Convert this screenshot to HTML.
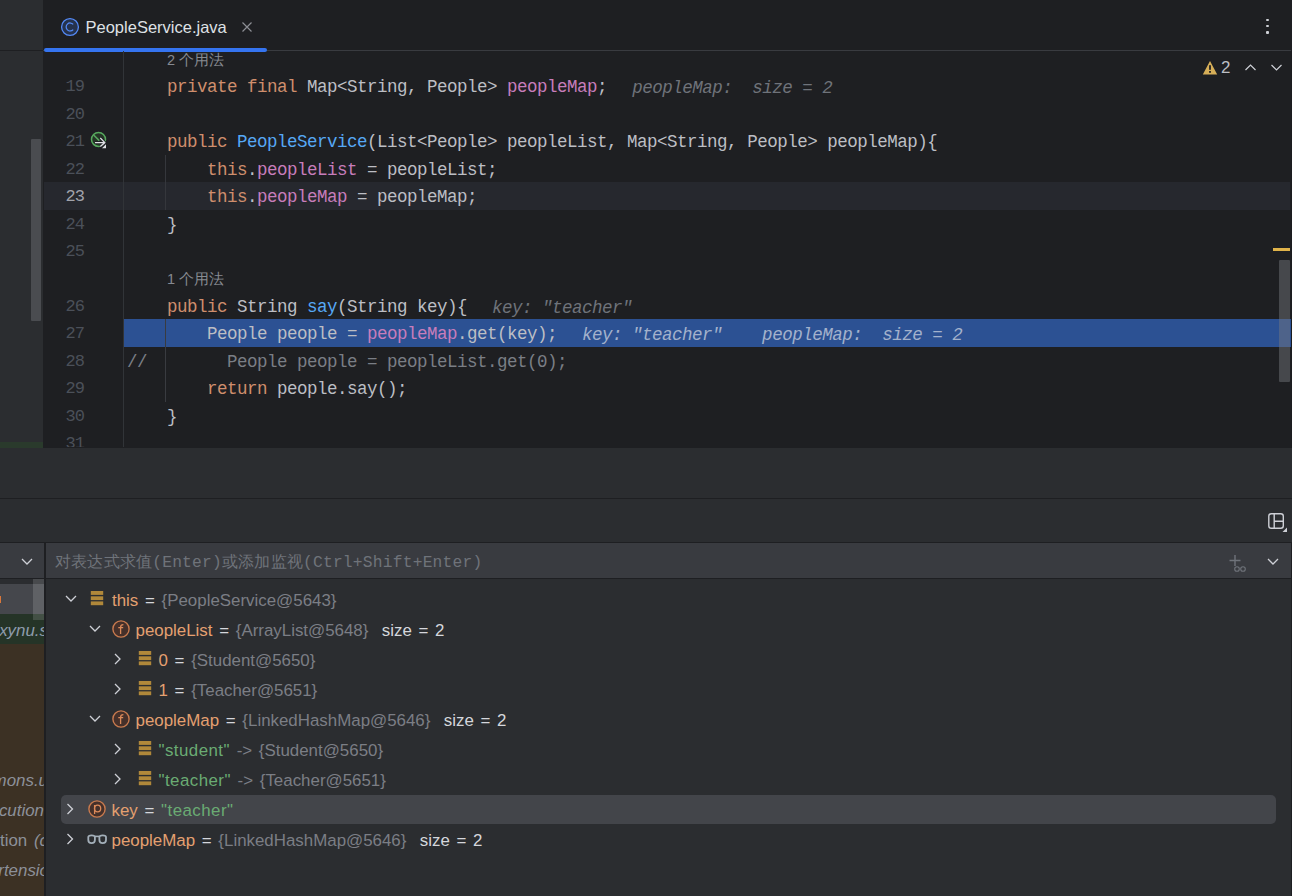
<!DOCTYPE html>
<html><head><meta charset="utf-8">
<style>
*{margin:0;padding:0;box-sizing:border-box}
html,body{width:1292px;height:896px;overflow:hidden;background:#2b2d30}
body{position:relative;font-family:"Liberation Sans",sans-serif}
.abs{position:absolute}
.mono{font-family:"Liberation Mono",monospace}
/* editor */
#editor{left:43px;top:0;width:1249px;height:448px;background:#1e1f22;overflow:hidden}
#tabsep{left:0;top:50px;width:1248px;height:1px;background:#393b40}
#tabline{left:1px;top:48px;width:223px;height:3.6px;background:#3574f0;border-radius:2px}
#tabtext{left:42.5px;top:15px;font-size:16.5px;color:#dfe1e5;white-space:pre;line-height:24px}
.row{position:absolute;left:0;width:1249px;height:27.43px;line-height:27.43px;white-space:pre;font-family:"Liberation Mono",monospace;font-size:17.5px;letter-spacing:-0.5px;color:#bcbec4}
.ln{position:absolute;left:0;width:41px;text-align:right;color:#4b5059;font-size:17px;letter-spacing:-0.9px;transform:translateY(-0.7px)}
.code{position:absolute;left:84px}
.hintu{position:absolute;left:124px;font-family:"Liberation Sans",sans-serif;font-size:14.5px;letter-spacing:0.1px;color:#868a91}
.kw{color:#cf8e6d}.fn{color:#56a8f5}.fld{color:#c77dbb}.cmt{color:#7a7e85}
.iv{font-style:italic;color:#6f737a;margin-left:5px;position:relative;top:1px}
#gsep{left:80px;top:51px;width:1px;height:396px;background:#313438}
/* lower */
.hline{position:absolute;left:0;width:1292px;height:1px;background:#1e1f22}
.tree{position:absolute;height:30px;line-height:30px;white-space:pre;font-size:16.9px;word-spacing:2px;color:#d5d7dc}
.vn{color:#e4a070}.vv{color:#7b7e85}.vs{color:#6aab73;letter-spacing:0.45px}
</style></head>
<body>
<!-- left side panel -->
<div class="abs" style="left:0;top:0;width:43px;height:448px;background:#2b2d30"></div>
<div class="abs" style="left:0;top:50px;width:43px;height:1px;background:#1e1f22"></div>
<div class="abs" style="left:31px;top:139px;width:10px;height:182px;background:#4a4c50;border-radius:1px"></div>
<div class="abs" style="left:0;top:442px;width:43px;height:5.5px;background:#2a3a2c"></div>

<div id="editor" class="abs">
  <div id="tabsep" class="abs"></div>
  <!-- tab icon -->
  <svg class="abs" style="left:17px;top:17px" width="20" height="20" viewBox="0 0 20 20">
    <circle cx="10" cy="10" r="8.4" fill="#25324d" stroke="#548af7" stroke-width="1.3"/>
    <path d="M13.2 7.4 A4 4 0 1 0 13.2 12.6" fill="none" stroke="#548af7" stroke-width="1.25"/>
  </svg>
  <div id="tabtext" class="abs">PeopleService.java</div>
  <svg class="abs" style="left:198px;top:21px" width="12" height="12" viewBox="0 0 12 12">
    <path d="M1.5 1.5 L10.5 10.5 M10.5 1.5 L1.5 10.5" stroke="#8c8e94" stroke-width="1.2"/>
  </svg>
  <div id="tabline" class="abs"></div>
  <!-- kebab -->
  <div class="abs" style="left:1223px;top:18.5px;width:2.5px;height:2.5px;background:#ced0d6;border-radius:1px"></div>
  <div class="abs" style="left:1223px;top:24.7px;width:2.5px;height:2.5px;background:#ced0d6;border-radius:1px"></div>
  <div class="abs" style="left:1223px;top:31px;width:2.5px;height:2.5px;background:#ced0d6;border-radius:1px"></div>

  <!-- caret row & execution line -->
  <div class="abs" style="left:1px;top:182.3px;width:1246px;height:27.43px;background:#26282e"></div>
  <div class="abs" style="left:81px;top:318.7px;width:1167px;height:28.3px;background:#2c5193"></div>
  <div id="gsep" class="abs"></div>
  <!-- indent guides -->
  <div class="abs" style="left:122px;top:154.5px;width:1px;height:55px;background:#35373c"></div>
  <div class="abs" style="left:122px;top:318.7px;width:1px;height:83px;background:#393b40"></div>

  <div class="abs" style="left:0;top:51px;width:1249px;height:396px;overflow:hidden"><div class="abs" style="left:0;top:-4px;width:1249px;height:402px">
    <div class="row" style="top:0px"><span class="hintu">2 个用法</span></div>
    <div class="row" style="top:27.43px"><span class="ln">19</span><span class="code">    <span class="kw">private final </span>Map&lt;String, People&gt; <span class="fld">peopleMap</span>;  <span class="iv">peopleMap:  size = 2</span></span></div>
    <div class="row" style="top:54.86px"><span class="ln">20</span></div>
    <div class="row" style="top:82.29px"><span class="ln">21</span><span class="code">    <span class="kw">public </span><span class="fn">PeopleService</span>(List&lt;People&gt; peopleList, Map&lt;String, People&gt; peopleMap){</span></div>
    <div class="row" style="top:109.72px"><span class="ln">22</span><span class="code">        <span class="kw">this</span>.<span class="fld">peopleList</span> = peopleList;</span></div>
    <div class="row" style="top:137.15px"><span class="ln" style="color:#a1a3ab">23</span><span class="code">        <span class="kw">this</span>.<span class="fld">peopleMap</span> = peopleMap;</span></div>
    <div class="row" style="top:164.58px"><span class="ln">24</span><span class="code">    }</span></div>
    <div class="row" style="top:192.01px"><span class="ln">25</span></div>
    <div class="row" style="top:219.44px"><span class="hintu">1 个用法</span></div>
    <div class="row" style="top:246.87px"><span class="ln">26</span><span class="code">    <span class="kw">public </span>String <span class="fn">say</span>(String key){  <span class="iv">key: "teacher"</span></span></div>
    <div class="row" style="top:274.30px"><span class="ln">27</span><span class="code">        People people = <span class="fld">peopleMap</span>.get(key);  <span class="iv" style="color:#a3b1cc">key: "teacher"    peopleMap:  size = 2</span></span></div>
    <div class="row" style="top:301.73px"><span class="ln">28</span><span class="code cmt">//        People people = peopleList.get(0);</span></div>
    <div class="row" style="top:329.16px"><span class="ln">29</span><span class="code">        <span class="kw">return </span>people.say();</span></div>
    <div class="row" style="top:356.59px"><span class="ln">30</span><span class="code">    }</span></div>
    <div class="row" style="top:384.02px"><span class="ln">31</span></div>
  </div></div>

  <!-- run gutter icon line 21 -->
  <svg class="abs" style="left:47px;top:131px" width="18" height="19" viewBox="0 0 18 19">
    <circle cx="8.5" cy="8.4" r="7" fill="#243426" stroke="#57a85e" stroke-width="1.5"/>
    <path d="M3.6 4 L9.3 9.6" stroke="#57a85e" stroke-width="1.5"/>
    <path d="M5 11.6 H14.6 M10.3 7 L14.8 11.6 L10.3 15.6" fill="none" stroke="#1e1f22" stroke-width="3"/>
    <path d="M5 11.6 H14.6 M10.3 7 L14.8 11.6 L10.3 15.6" fill="none" stroke="#dfe1e5" stroke-width="1.3"/>
    <path d="M12 17.2 L16 17.2 L16 13.2 Z" fill="#dfe1e5"/>
  </svg>

  <!-- warnings -->
  <svg class="abs" style="left:1159px;top:60px" width="16" height="16" viewBox="0 0 16 16">
    <path d="M8 1 L15.2 14.4 L0.8 14.4 Z" fill="#d6ae58"/>
    <rect x="7.1" y="5.2" width="1.8" height="4.6" fill="#1e1f22"/>
    <rect x="7.1" y="11" width="1.8" height="1.8" fill="#1e1f22"/>
  </svg>
  <div class="abs" style="left:1178px;top:57px;font-size:17px;line-height:22px;color:#bcbec4">2</div>
  <svg class="abs" style="left:1201px;top:63px" width="13" height="9" viewBox="0 0 13 9">
    <path d="M1.5 7 L6.5 2 L11.5 7" fill="none" stroke="#ced0d6" stroke-width="1.2"/>
  </svg>
  <svg class="abs" style="left:1227px;top:63px" width="13" height="9" viewBox="0 0 13 9">
    <path d="M1.5 2 L6.5 7 L11.5 2" fill="none" stroke="#ced0d6" stroke-width="1.2"/>
  </svg>
  <!-- scrollbar -->
  <div class="abs" style="left:1230px;top:248px;width:17px;height:2.5px;background:#e0b34a"></div>
  <div class="abs" style="left:1235.5px;top:259.5px;width:11px;height:122px;background:rgba(120,122,128,0.45);border-radius:1px"></div>
</div>

<div class="abs" style="left:1291px;top:51px;width:1px;height:397px;background:#1b1c1f"></div>
<!-- lower area -->
<div class="hline" style="top:498px"></div>
<div class="hline" style="top:542px"></div>
<!-- layout icon -->
<svg class="abs" style="left:1266px;top:511px" width="22" height="22" viewBox="0 0 22 22">
  <rect x="2.8" y="2.8" width="14.5" height="14.5" rx="2.5" fill="none" stroke="#ced0d6" stroke-width="1.4"/>
  <path d="M8.2 2.8 V17.3 M8.2 10.3 H17.3" stroke="#ced0d6" stroke-width="1.4"/>
  <path d="M16.5 21 L21 21 L21 16.5 Z" fill="#ced0d6"/>
</svg>
<!-- expression row -->
<div class="abs" style="left:0;top:543px;width:1291px;height:35px;background:#393b40"></div>
<div class="abs" style="left:44px;top:543px;width:1.6px;height:353px;background:#1e1f22"></div>
<svg class="abs" style="left:20px;top:556px" width="14" height="11" viewBox="0 0 14 11">
  <path d="M2 3 L7 8 L12 3" fill="none" stroke="#ced0d6" stroke-width="1.3"/>
</svg>
<div class="abs mono" style="left:55px;top:551px;font-size:16.3px;letter-spacing:0.2px;line-height:24px;color:#6f737a;white-space:pre">对表达式求值(Enter)或添加监视(Ctrl+Shift+Enter)</div>
<svg class="abs" style="left:1226px;top:552px" width="22" height="22" viewBox="0 0 22 22">
  <path d="M9 3 V14 M3.5 8.5 H14.5" stroke="#6f737a" stroke-width="1.4"/>
  <circle cx="11" cy="17" r="2.3" fill="none" stroke="#6f737a" stroke-width="1.1"/>
  <circle cx="17" cy="17" r="2.3" fill="none" stroke="#6f737a" stroke-width="1.1"/>
</svg>
<svg class="abs" style="left:1266px;top:556px" width="14" height="11" viewBox="0 0 14 11">
  <path d="M2 3 L7 8 L12 3" fill="none" stroke="#ced0d6" stroke-width="1.3"/>
</svg>
<div class="hline" style="top:578px"></div>
<div class="abs" style="left:1291px;top:543px;width:1px;height:353px;background:#1e1f22"></div>

<!-- frames list -->
<div class="abs" style="left:0;top:583.5px;width:44px;height:30.5px;background:#45474c"></div>
<div class="abs" style="left:0;top:595.5px;width:1.4px;height:7.5px;background:#d9773a"></div>
<div class="abs" style="left:0;top:614px;width:44px;height:30px;background:#253427"></div>
<div class="abs" style="left:0;top:644px;width:44px;height:252px;background:#3c3124"></div>
<div class="abs" style="left:33px;top:579px;width:10.5px;height:41px;background:rgba(255,255,255,0.14)"></div>
<div class="abs" style="left:0;top:579px;width:44px;height:317px;overflow:hidden">
  <div class="tree" style="right:-4px;top:37px;font-style:italic;color:#8d9bab">xynu.s</div>
  <div class="tree" style="right:-4px;top:187px;font-style:italic;color:#8c9099">mons.u</div>
  <div class="tree" style="right:0px;top:217px;font-style:italic;color:#8c9099">cution</div>
  <div class="tree" style="right:-4px;top:247px;color:#8c9099">tion <i>(c</i></div>
  <div class="tree" style="right:-5px;top:277px;font-style:italic;color:#8c9099">rtensio</div>
</div>

<!-- variables tree -->
<div class="abs" style="left:61px;top:794.5px;width:1215px;height:29.5px;background:#43454a;border-radius:5px"></div>
<!-- icons -->
<svg class="abs" style="left:0;top:579px" width="560" height="317" viewBox="0 579 560 317">
  <defs>
    <g id="chd"><path d="M-5 -3 L0 2 L5 -3" fill="none" stroke="#ced0d6" stroke-width="1.3"/></g>
    <g id="chr"><path d="M-3 -5 L2 0 L-3 5" fill="none" stroke="#ced0d6" stroke-width="1.3"/></g>
    <g id="stk" fill="#b0883a"><rect x="-6.2" y="-7" width="12.4" height="3.9"/><rect x="-6.2" y="-1.7" width="12.4" height="3.8"/><rect x="-6.2" y="3.4" width="12.4" height="3.8"/></g>
    <g id="fic"><circle r="8.1" fill="#45302a" stroke="#c97a4e" stroke-width="1.4"/></g>
  </defs>
  <use href="#chd" x="71" y="599"/>
  <use href="#stk" x="97" y="598"/>
  <use href="#chd" x="95" y="629"/>
  <use href="#fic" x="121" y="629"/>
  <path d="M120.6 634 V627.3 Q120.6 624.7 123.4 624.7 M118.3 627.6 H123.2" fill="none" stroke="#dc8a5a" stroke-width="1.3"/>
  <use href="#chr" x="118" y="659"/>
  <use href="#stk" x="145" y="658"/>
  <use href="#chr" x="118" y="689"/>
  <use href="#stk" x="145" y="688"/>
  <use href="#chd" x="95" y="719"/>
  <use href="#fic" x="121" y="719"/>
  <path d="M120.6 724 V717.3 Q120.6 714.7 123.4 714.7 M118.3 717.6 H123.2" fill="none" stroke="#dc8a5a" stroke-width="1.3"/>
  <use href="#chr" x="118" y="749"/>
  <use href="#stk" x="145" y="748"/>
  <use href="#chr" x="118" y="779"/>
  <use href="#stk" x="145" y="778"/>
  <use href="#chr" x="70.5" y="809"/>
  <use href="#fic" x="97" y="809"/>
  <path d="M94.6 805 V814" stroke="#dc8a5a" stroke-width="1.3"/><ellipse cx="97.6" cy="808.5" rx="3.1" ry="3.4" fill="none" stroke="#dc8a5a" stroke-width="1.3"/>
  <use href="#chr" x="70.5" y="839"/>
  <g fill="none" stroke="#a3afb9" stroke-width="1.8">
    <path d="M88.3 837 Q88.3 835.4 91.6 835.4 Q94.9 835.4 94.9 837 V840 Q94.9 843.2 91.6 843.2 Q88.3 843.2 88.3 840 Z"/><path d="M99.4 837 Q99.4 835.4 102.7 835.4 Q106 835.4 106 837 V840 Q106 843.2 102.7 843.2 Q99.4 843.2 99.4 840 Z"/><path d="M94.9 836.4 H99.4" stroke-width="1.6"/>
  </g>
</svg>
<div class="tree" style="left:112px;top:586px"><span class="vn">this</span> = <span class="vv">{PeopleService@5643}</span></div>
<div class="tree" style="left:135.5px;top:616px"><span class="vn">peopleList</span> = <span class="vv">{ArrayList@5648}</span>  size = 2</div>
<div class="tree" style="left:158.5px;top:646px"><span class="vn">0</span> = <span class="vv">{Student@5650}</span></div>
<div class="tree" style="left:158.5px;top:676px"><span class="vn">1</span> = <span class="vv">{Teacher@5651}</span></div>
<div class="tree" style="left:135.5px;top:706px"><span class="vn">peopleMap</span> = <span class="vv">{LinkedHashMap@5646}</span>  size = 2</div>
<div class="tree" style="left:158.5px;top:736px"><span class="vs">"student"</span> <span class="vv">-&gt; {Student@5650}</span></div>
<div class="tree" style="left:158.5px;top:766px"><span class="vs">"teacher"</span> <span class="vv">-&gt; {Teacher@5651}</span></div>
<div class="tree" style="left:111.5px;top:796px"><span class="vn">key</span> = <span class="vs">"teacher"</span></div>
<div class="tree" style="left:111.5px;top:826px"><span class="vn">peopleMap</span> = <span class="vv">{LinkedHashMap@5646}</span>  size = 2</div>
</body></html>
